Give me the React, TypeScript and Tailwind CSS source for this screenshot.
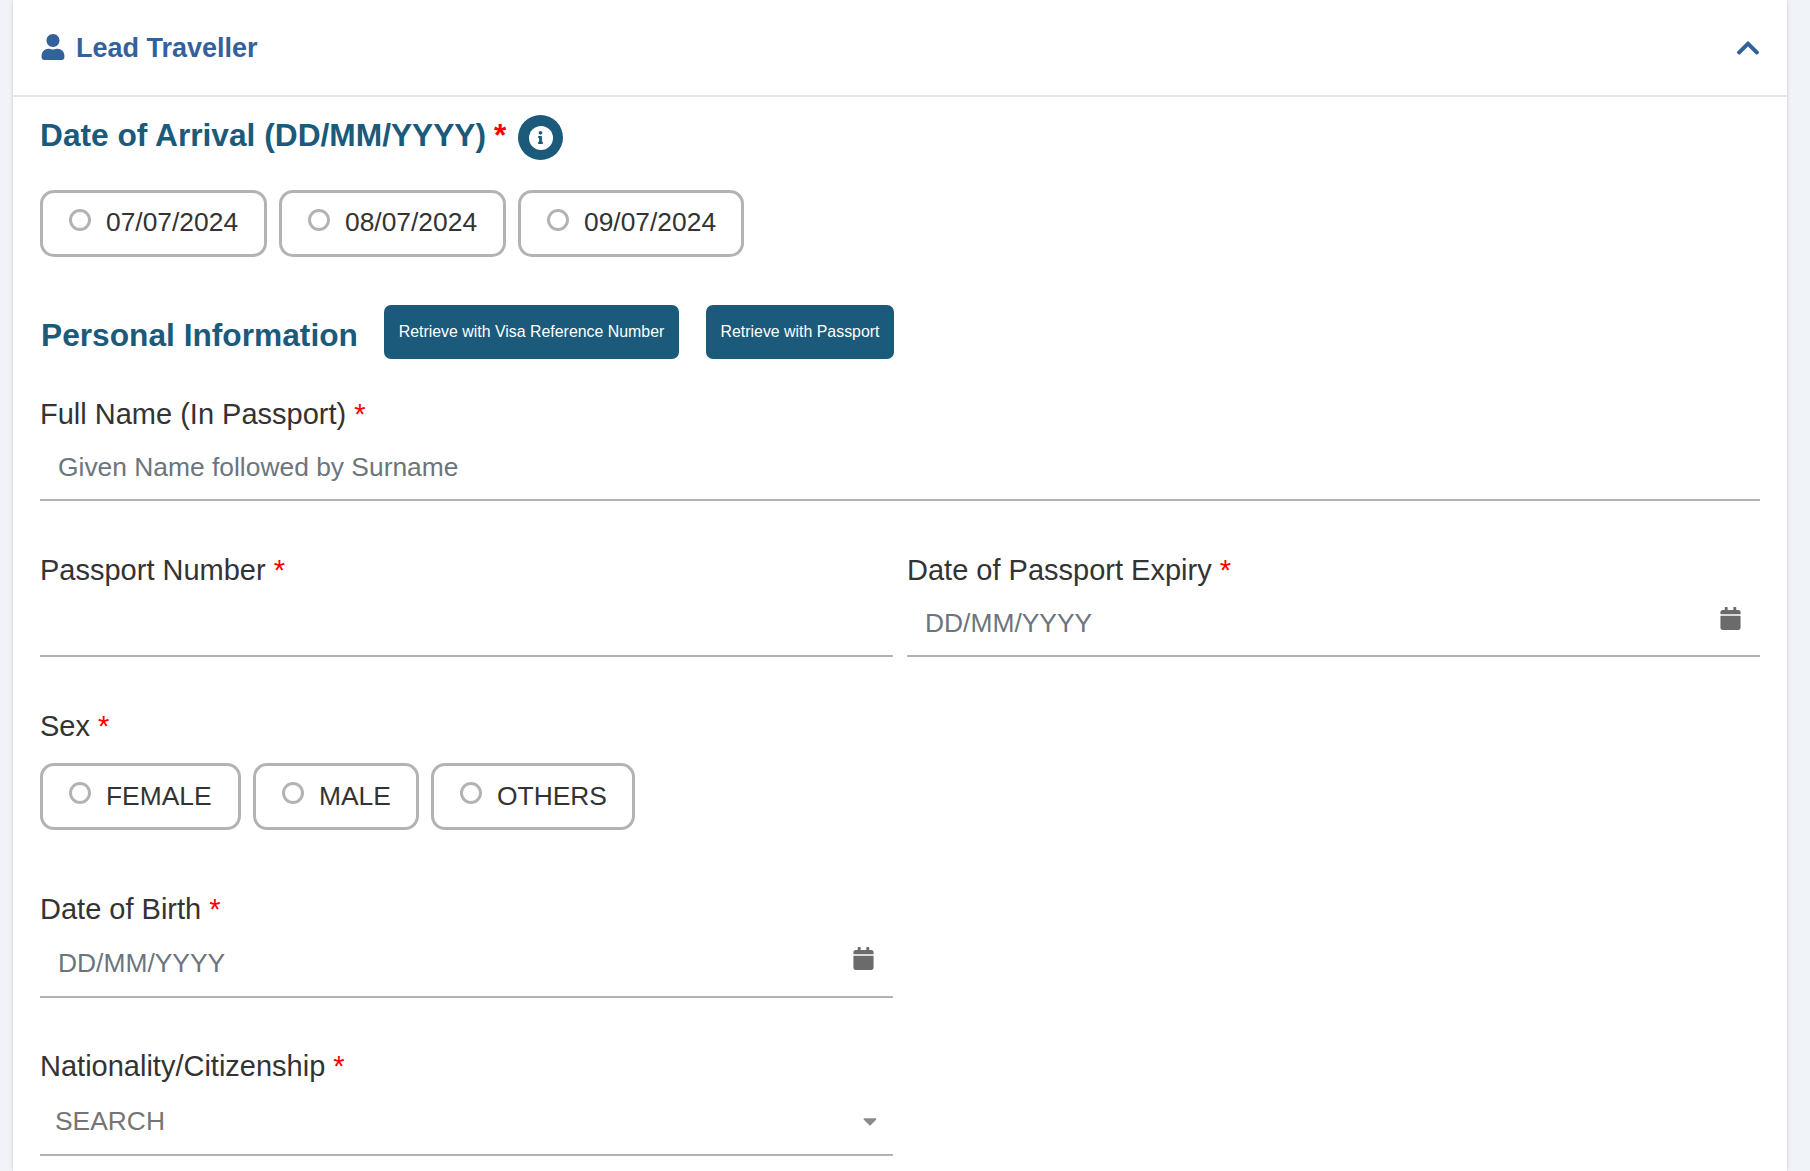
import { FaUser, FaChevronUp, FaCalendar, FaInfo, FaCaretDown } from "react-icons/fa";

const Req = () => <span className="text-[#ff0000] ml-[8px]">*</span>;

function Pills({ items, widths, textClass }: { items: string[]; widths: number[]; textClass: string }) {
  return (
    <div className="flex gap-[12px]">
      {items.map((t, i) => (
        <label key={t} style={{ width: widths[i] }} className="h-[67px] flex items-center pl-[26px] border-[3px] border-[#b3b3b3] rounded-[14px] bg-white">
          <span className="w-[22px] h-[22px] rounded-full border-[3px] border-[#b3b3b3] -mt-[7px] shrink-0" />
          <span className={`ml-[15px] text-[26.4px] leading-none text-[#333333] ${textClass}`}>{t}</span>
        </label>
      ))}
    </div>
  );
}

function Label({ children }: { children: string }) {
  return (
    <div className="text-[29px] leading-[36px] text-[#333333]">
      {children}
      <Req />
    </div>
  );
}

function Field({ label, placeholder, icon, className, tall }: { label: string; placeholder?: string; icon?: boolean; className?: string; tall?: boolean }) {
  return (
    <div className={className}>
      <Label>{label}</Label>
      <div className={`${tall ? "h-[71px]" : "h-[69px]"} border-b-2 border-[#b3b3b3] flex items-center justify-between pl-[18px] pr-[18px]`}>
        <span className="text-[26.4px] text-[#6c757d] mt-[4px]">{placeholder}</span>
        {icon && <FaCalendar className="text-[#6b6b6b] text-[23px] -mt-[6px]" />}
      </div>
    </div>
  );
}

export default function App() {
  return (
    <div className="h-[1171px] overflow-hidden bg-[#f0f4f8] font-['Liberation_Sans',Arial,sans-serif]">
      <div className="ml-[13px] w-[1774px] h-full bg-white shadow-[0_0_4px_rgba(0,0,0,0.15)]">
        <div className="h-[97px] border-b-[2px] border-[#e6e6e6] flex items-center justify-between pl-[27px] pr-[26px]">
          <div className="flex items-center gap-[10px] text-[#33619a]">
            <FaUser className="text-[26px] -mt-[2px]" />
            <span className="text-[27px] font-bold mt-[1px]">Lead Traveller</span>
          </div>
          <FaChevronUp className="text-[#33619a] text-[26px]" />
        </div>

        <div className="px-[27px]">
          <div className="flex items-center h-[43px] mt-[17px]">
            <h2 className="text-[31.7px] font-bold leading-none text-[#1b5a7a]">
              Date of Arrival (DD/MM/YYYY)
              <Req />
            </h2>
            <span className="ml-[12px] mt-[4px] w-[45px] h-[45px] rounded-full bg-[#1b5a7a] flex items-center justify-center">
              <span className="w-[24px] h-[24px] rounded-full bg-white flex items-center justify-center text-[#1b5a7a]">
                <FaInfo className="text-[13px]" />
              </span>
            </span>
          </div>

          <div className="mt-[33px]">
            <Pills textClass="-mt-[3px]" items={["07/07/2024", "08/07/2024", "09/07/2024"]} widths={[227, 227, 226]} />
          </div>

          <div className="flex items-center mt-[48px] h-[54px]">
            <h2 className="text-[31.7px] font-bold leading-none text-[#1b5a7a] w-[344px] mt-[8px] pl-[1px]">Personal Information</h2>
            <button className="w-[295px] h-[54px] rounded-[7px] bg-[#1b5a7a] text-white text-[15.9px]">Retrieve with Visa Reference Number</button>
            <button className="ml-[27px] w-[188px] h-[54px] rounded-[7px] bg-[#1b5a7a] text-white text-[15.9px]">Retrieve with Passport</button>
          </div>

          <Field className="mt-[37px]" label="Full Name (In Passport)" placeholder="Given Name followed by Surname" />

          <div className="grid grid-cols-[853px_1fr] gap-x-[14px] mt-[51px]">
            <Field label="Passport Number" />
            <Field label="Date of Passport Expiry" placeholder="DD/MM/YYYY" icon />
          </div>

          <div className="mt-[51px]">
            <Label>Sex</Label>
            <div className="mt-[19px]">
              <Pills textClass="-mt-[1px]" items={["FEMALE", "MALE", "OTHERS"]} widths={[201, 166, 204]} />
            </div>
          </div>

          <div className="grid grid-cols-[853px_1fr] gap-x-[14px] mt-[61px]">
            <Field label="Date of Birth" placeholder="DD/MM/YYYY" icon tall />
          </div>

          <div className="grid grid-cols-[853px_1fr] gap-x-[14px] mt-[50px]">
            <div>
              <Label>Nationality/Citizenship</Label>
              <div className="h-[72px] border-b-2 border-[#b3b3b3] flex items-center justify-between pl-[15px] pr-[12px]">
                <span className="text-[26.4px] text-[#757575] mt-[5px]">SEARCH</span>
                <FaCaretDown className="text-[#8a8a8a] text-[22px] mt-[3px]" />
              </div>
            </div>
          </div>
        </div>
      </div>
    </div>
  );
}
